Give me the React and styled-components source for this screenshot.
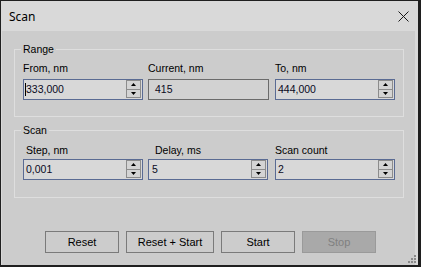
import React from "react";
import styled, { createGlobalStyle } from "styled-components";

const Global = createGlobalStyle`
  html, body {
    margin: 0;
    padding: 0;
    background: #ffffff;
  }
  body {
    font-family: "Liberation Sans", Arial, sans-serif;
  }
`;

const Window = styled.div`
  position: relative;
  width: 421px;
  height: 267px;
  box-sizing: border-box;
  border: 1px solid #1f1f1f;
  border-right-width: 3px;
  border-bottom-width: 2px;
  background: #d9d9d9;
  display: flex;
  flex-direction: column;
`;

const TitleBar = styled.div`
  height: 30px;
  flex: none;
  display: flex;
  align-items: center;
  justify-content: space-between;
  padding: 0 9px 0 8px;
  font-family: "Noto Sans", "Open Sans", sans-serif;
  font-size: 12px;
  color: #000;
`;

const CloseButton = styled.button`
  border: 0;
  background: transparent;
  padding: 0;
  width: 12px;
  height: 12px;
  display: flex;
  align-items: center;
  justify-content: center;
  margin-top: 1px;
`;

const Body = styled.div`
  flex: 1;
  margin: 0 3px 0 1px;
  background: #cccccc;
  display: flex;
  flex-direction: column;
`;

const Group = styled.fieldset`
  margin: ${(p) => p.$top}px 11px 0 12px;
  padding: ${(p) => p.$padTop}px 0 ${(p) => p.$padBottom}px 8px;
  border: 1px solid #dedede;
  min-width: 0;
`;

const Legend = styled.legend`
  margin-left: -2px;
  padding: 0 2px;
  font-size: 10.5px;
  line-height: 13px;
  color: #000;
`;

const Grid = styled.div`
  display: grid;
  grid-template-columns: 125px 127px 120px;
  row-gap: ${(p) => p.$gap}px;
`;

const Label = styled.div`
  font-size: 10.5px;
  line-height: 13px;
  color: #000;
  padding-left: ${(p) => p.$indent || 0}px;
`;

const Spin = styled.div`
  width: 120px;
  height: 21px;
  box-sizing: border-box;
  border: 1px solid #5a6b93;
  background: #d8d8d8;
  display: flex;
  align-items: stretch;
`;

const SpinValue = styled.div`
  flex: 1;
  padding-left: ${(p) => p.$pad}px;
  font-size: 10.5px;
  line-height: 19px;
  color: #0a0a1e;
  position: relative;
`;

const Caret = styled.span`
  position: absolute;
  left: 1px;
  top: 3px;
  width: 1px;
  height: 13px;
  background: #000;
`;

const SpinButtons = styled.div`
  width: 15px;
  margin: 0 1px 1px 0;
  display: flex;
  flex-direction: column;
  border: 1px solid #8c8c8c;
  box-sizing: border-box;
  background: #d4d4d4;
`;

const Arrow = styled.div`
  flex: 1;
  display: flex;
  align-items: center;
  justify-content: center;
  border-top: ${(p) => (p.$down ? "1px solid #8c8c8c" : "0")};
`;

const ReadOnlyBox = styled.div`
  width: 121px;
  height: 21px;
  box-sizing: border-box;
  border: 1px solid #6b6b6b;
  background: #d2d2d2;
  padding-left: 6px;
  font-size: 10.5px;
  line-height: 19px;
  color: #0a0a1e;
`;

const ButtonRow = styled.div`
  margin-top: 33px;
  display: flex;
  justify-content: center;
  gap: 7px;
  padding-left: 4px;
`;

const Button = styled.button`
  width: ${(p) => p.$w}px;
  height: 22px;
  box-sizing: border-box;
  border: 1px solid ${(p) => (p.disabled ? "#9a9a9a" : "#7a7a7a")};
  background: ${(p) => (p.disabled ? "#a9a9a9" : "#cccccc")};
  color: ${(p) => (p.disabled ? "#808080" : "#000")};
  font-family: "Liberation Sans", Arial, sans-serif;
  font-size: 11px;
  padding: 0;
`;

const Grip = styled.svg`
  position: absolute;
  right: 1px;
  bottom: 1px;
`;

function UpDown({ value, pad = 2, caret }) {
  return (
    <Spin>
      <SpinValue $pad={pad}>
        {caret && <Caret />}
        {value}
      </SpinValue>
      <SpinButtons>
        <Arrow>
          <svg width="5" height="3" viewBox="0 0 5 3">
            <path d="M2.5 0 L5 3 L0 3 Z" fill="#000" />
          </svg>
        </Arrow>
        <Arrow $down>
          <svg width="5" height="3" viewBox="0 0 5 3">
            <path d="M0 0 L5 0 L2.5 3 Z" fill="#000" />
          </svg>
        </Arrow>
      </SpinButtons>
    </Spin>
  );
}

export default function App() {
  return (
    <>
      <Global />
      <Window>
        <TitleBar>
          <span>Scan</span>
          <CloseButton aria-label="Close">
            <svg width="11" height="11" viewBox="0 0 11 11">
              <path d="M0.5 0.5 L10.5 10.5 M10.5 0.5 L0.5 10.5" stroke="#1a1a1a" strokeWidth="1" />
            </svg>
          </CloseButton>
        </TitleBar>
        <Body>
          <Group $top={12} $padTop={6} $padBottom={16}>
            <Legend>Range</Legend>
            <Grid $gap={4}>
              <Label>From, nm</Label>
              <Label>Current, nm</Label>
              <Label>To, nm</Label>
              <UpDown value="333,000" caret />
              <ReadOnlyBox>415</ReadOnlyBox>
              <UpDown value="444,000" />
            </Grid>
          </Group>
          <Group $top={7} $padTop={7} $padBottom={17}>
            <Legend>Scan</Legend>
            <Grid $gap={2}>
              <Label $indent={3}>Step, nm</Label>
              <Label $indent={7}>Delay, ms</Label>
              <Label>Scan count</Label>
              <UpDown value="0,001" />
              <UpDown value="5" pad={3} />
              <UpDown value="2" />
            </Grid>
          </Group>
          <ButtonRow>
            <Button $w={74}>Reset</Button>
            <Button $w={88}>Reset + Start</Button>
            <Button $w={74}>Start</Button>
            <Button $w={74} disabled>
              Stop
            </Button>
          </ButtonRow>
        </Body>
        <Grip width="10" height="10" viewBox="0 0 10 10">
          <rect x="7" y="1" width="2" height="2" fill="#8a8a8a" />
          <rect x="4" y="4" width="2" height="2" fill="#8a8a8a" />
          <rect x="7" y="4" width="2" height="2" fill="#8a8a8a" />
          <rect x="1" y="7" width="2" height="2" fill="#8a8a8a" />
          <rect x="4" y="7" width="2" height="2" fill="#8a8a8a" />
          <rect x="7" y="7" width="2" height="2" fill="#8a8a8a" />
        </Grip>
      </Window>
    </>
  );
}
